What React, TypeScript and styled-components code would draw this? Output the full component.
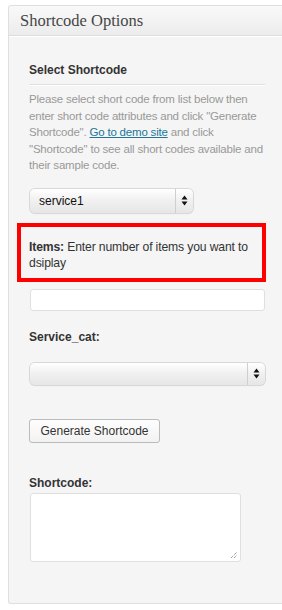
import React from "react";
import styled, { createGlobalStyle } from "styled-components";

const Global = createGlobalStyle`
  html, body { margin: 0; padding: 0; background: #fff; }
  body { font-family: "Liberation Sans", Arial, sans-serif; }
`;

const Panel = styled.div`
  margin: 5px 0 0 8px;
  width: 274px;
  height: 599px;
  box-sizing: border-box;
  border: 1px solid #dfdfdf;
  border-right: none;
  border-radius: 3px 0 0 3px;
  background: #f5f5f5;
  overflow: hidden;
`;

const Header = styled.div`
  height: 29px;
  border-bottom: 1px solid #dcdcdc;
  background: linear-gradient(to bottom, #f9f9f9, #ececec);
  font-family: "Liberation Serif", Georgia, serif;
  font-size: 16.5px;
  line-height: 29px;
  padding-left: 11px;
  color: #464646;
  box-shadow: 0 1px 0 #fff;
`;

const Body = styled.div`
  padding: 26px 17px 0 20px;
  display: flex;
  flex-direction: column;
`;

const SectionTitle = styled.div`
  font-weight: bold;
  font-size: 12px;
  line-height: 16px;
  color: #333;
  padding-bottom: 6px;
  border-bottom: 1px solid #dfdfdf;
  box-shadow: 0 1px 0 #fff;
`;

const Help = styled.p`
  margin: 6px 0 0;
  font-size: 11.5px;
  letter-spacing: -0.2px;
  line-height: 16.5px;
  color: #999;
  a { color: #21759b; text-decoration: underline; }
`;

const SelectBox = styled.div<{ $w: number; $top: number; $h: number }>`
  margin-top: ${(p) => p.$top}px;
  margin-left: 1px;
  width: ${(p) => p.$w}px;
  height: ${(p) => p.$h}px;
  box-sizing: border-box;
  display: flex;
  border-radius: 5px;
  background: linear-gradient(to bottom, #ffffff 0%, #f1f1f1 45%, #e6e6e6 100%);
  box-shadow: 0 0 0 1px #d8d8d8, 0 1px 1px rgba(0,0,0,0.12);
`;

const SelectText = styled.div`
  flex: 1;
  font-size: 12px;
  color: #111;
  padding-left: 9px;
  display: flex;
  align-items: center;
  border-right: 1px solid #cfcfcf;
`;

const SelectArrows = styled.div`
  width: 17px;
  display: flex;
  align-items: center;
  justify-content: center;
`;

const Callout = styled.div`
  margin: 10px -1px 0 -12px;
  border: 4px solid #f00;
  padding: 12px 8px 7px 8px;
  font-size: 12.2px;
  letter-spacing: -0.15px;
  line-height: 16px;
  color: #333;
  b { font-weight: bold; }
`;

const TextInput = styled.div`
  margin-top: 7px;
  margin-left: 1px;
  height: 22px;
  box-sizing: border-box;
  border: 1px solid #dfdfdf;
  border-radius: 3px;
  background: #fff;
`;

const FieldLabel = styled.div<{ $top: number }>`
  margin-top: ${(p) => p.$top}px;
  font-weight: bold;
  font-size: 12px;
  line-height: 16px;
  color: #333;
`;

const Button = styled.div`
  margin-top: 34px;
  align-self: flex-start;
  height: 24px;
  width: 131px;
  box-sizing: border-box;
  border: 1px solid #bbb;
  border-radius: 3px;
  background: linear-gradient(to bottom, #fefefe, #f2f2f2);
  font-size: 12px;
  color: #333;
  display: flex;
  align-items: center;
  justify-content: center;
`;

const TextArea = styled.div`
  margin-top: 2px;
  margin-left: 1px;
  width: 211px;
  height: 69px;
  box-sizing: border-box;
  border: 1px solid #dfdfdf;
  border-radius: 3px;
  background: #fff;
  position: relative;
`;

const Grip = styled.svg`
  position: absolute;
  right: 2px;
  bottom: 2px;
`;

const Arrows = () => (
  <svg width="7" height="11" viewBox="0 0 7 11">
    <path d="M3.5 0.5 L6.5 4.5 L0.5 4.5 Z" fill="#111" />
    <path d="M3.5 10.5 L6.5 6.5 L0.5 6.5 Z" fill="#111" />
  </svg>
);

export default function App() {
  return (
    <>
      <Global />
      <Panel>
        <Header>Shortcode Options</Header>
        <Body>
          <SectionTitle>Select Shortcode</SectionTitle>
          <Help>
            Please select short code from list below then enter short code
            attributes and click "Generate Shortcode". <a>Go to demo site</a> and
            click "Shortcode" to see all short codes available and their sample
            code.
          </Help>
          <SelectBox $w={163} $top={15} $h={24}>
            <SelectText>service1</SelectText>
            <SelectArrows>
              <Arrows />
            </SelectArrows>
          </SelectBox>
          <Callout>
            <b>Items:</b> Enter number of items you want to dsiplay
          </Callout>
          <TextInput />
          <FieldLabel $top={18}>Service_cat:</FieldLabel>
          <SelectBox $w={235} $top={18} $h={22}>
            <SelectText />
            <SelectArrows>
              <Arrows />
            </SelectArrows>
          </SelectBox>
          <Button>Generate Shortcode</Button>
          <FieldLabel $top={32}>Shortcode:</FieldLabel>
          <TextArea>
            <Grip width="8" height="8" viewBox="0 0 8 8">
              <path d="M1 7 L7 1 M4 7 L7 4" stroke="#777" strokeWidth="1" strokeDasharray="1 1" />
            </Grip>
          </TextArea>
        </Body>
      </Panel>
    </>
  );
}
